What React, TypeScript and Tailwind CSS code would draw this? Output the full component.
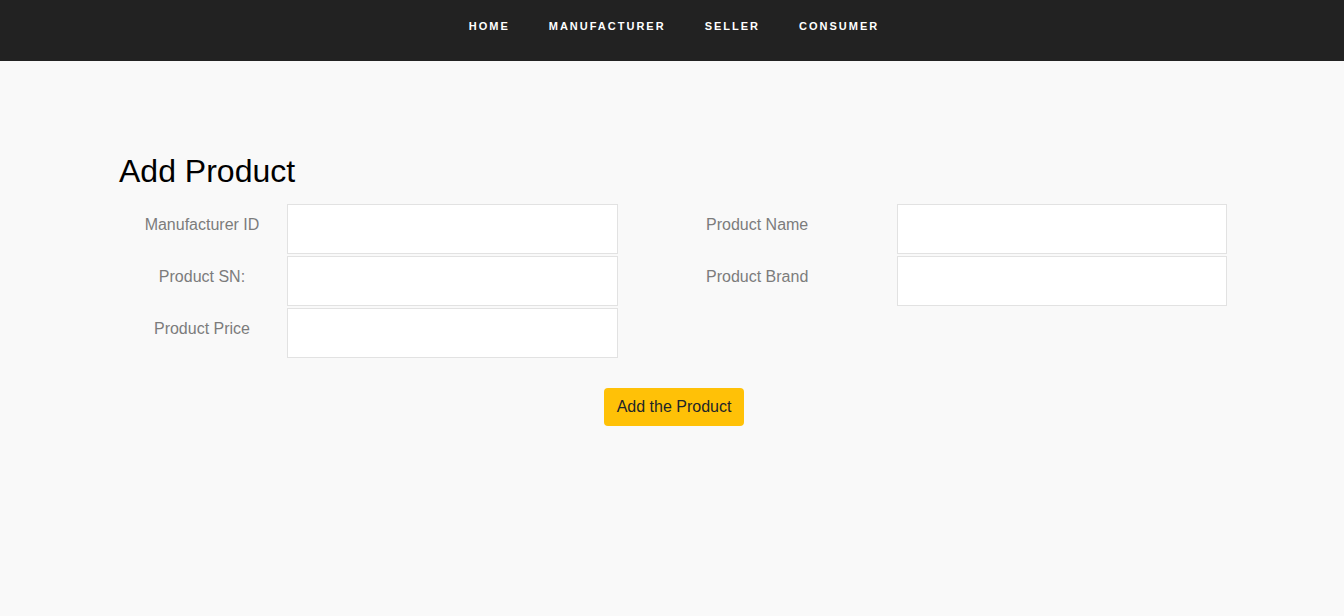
const navItems = ["HOME", "MANUFACTURER", "SELLER", "CONSUMER"];

function Field({ label, className }: { label: string; className: string }) {
  return (
    <div className="flex">
      <label className={className}>{label}</label>
      <input
        type="text"
        className="w-[331px] h-[50px] bg-white border border-[#e2e2e2] outline-none px-3"
      />
    </div>
  );
}

export default function App() {
  const leftLabel = "w-[170px] text-center pt-[9px] leading-6 text-[16px] text-[#7c7c7c]";
  const rightLabel = "w-[225px] pl-[34px] text-left pt-[9px] leading-6 text-[16px] text-[#7c7c7c]";

  return (
    <div className="min-h-[616px] bg-[#f9f9f9] font-['Liberation_Sans',Arial,sans-serif]">
      <nav className="h-[61px] bg-[#222222] flex justify-center pt-[20px]">
        <ul className="flex gap-[39px] pl-[4px]">
          {navItems.map((item) => (
            <li
              key={item}
              className="text-white text-[11px] font-bold tracking-[2px] leading-[13px]"
            >
              {item}
            </li>
          ))}
        </ul>
      </nav>

      <main className="w-[1110px] mx-auto pt-[92px]">
        <h1 className="text-[32px] leading-[37px] text-black pl-[2px]">Add Product</h1>

        <div className="flex mt-[14px]">
          <div className="w-[555px] flex flex-col gap-[2px]">
            <Field label="Manufacturer ID" className={leftLabel} />
            <Field label="Product SN:" className={leftLabel} />
            <Field label="Product Price" className={leftLabel} />
          </div>
          <div className="w-[555px] flex flex-col gap-[2px]">
            <Field label="Product Name" className={rightLabel} />
            <Field label="Product Brand" className={rightLabel} />
          </div>
        </div>

        <div className="flex justify-center mt-[30px] pl-[4px]">
          <button className="w-[140px] h-[38px] bg-[#ffc107] rounded-[4px] text-[16px] text-[#212529]">
            Add the Product
          </button>
        </div>
      </main>
    </div>
  );
}
